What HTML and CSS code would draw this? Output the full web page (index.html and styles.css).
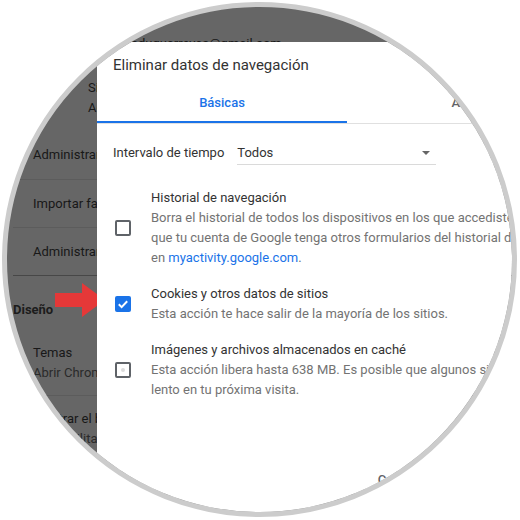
FILE: index.html
```html
<!DOCTYPE html>
<html lang="es">

<head>
    <meta charset="UTF-8">
    <title>Eliminar datos de navegación</title>
    <link rel="stylesheet" href="styles.css">
</head>

<body>
    <div class="lens">
        <!-- settings page behind the dialog (dimmed) -->
        <div class="page">
            <div class="account">
                <p class="email">eduguerreyes@gmail.com</p>
                <p class="acc-line">Sincronización activada</p>
                <p class="acc-line">Administrar tu cuenta de Google</p>
            </div>
            <div class="card">
                <div class="row">Administrar a otras personas</div>
                <div class="row">Importar favoritos y configuración</div>
                <div class="row">Administrar contraseñas</div>
            </div>
            <h2 class="section">Diseño</h2>
            <div class="card">
                <div class="row two">
                    <p>Temas</p>
                    <p class="sub">Abrir Chrome Web Store</p>
                </div>
                <div class="row two">
                    <p>Mostrar el botón de página principal</p>
                    <p class="sub">Deshabilitado</p>
                </div>
            </div>
        </div>

        <svg class="arrow" width="51" height="34" viewBox="0 0 51 34">
            <polygon points="0,10 27,10 27,0 50,17 27,34 27,24 0,24" />
        </svg>

        <div class="dialog">
            <h1 class="title">Eliminar datos de navegación</h1>
            <div class="tabs">
                <div class="tab active">Básicas</div>
                <div class="tab">Avanzado</div>
            </div>

            <div class="range">
                <span class="range-label">Intervalo de tiempo</span>
                <div class="select">
                    <span>Todos</span>
                    <span class="caret"></span>
                </div>
            </div>

            <div class="option">
                <span class="checkbox"></span>
                <div class="option-text">
                    <p class="option-title">Historial de navegación</p>
                    <p class="option-desc">Borra el historial de todos los dispositivos en los que accediste. Es posible<br>que tu cuenta de Google tenga otros formularios del historial de navegación<br>en <a href="#">myactivity.google.com</a>.</p>
                </div>
            </div>

            <div class="option">
                <span class="checkbox checked">
                    <svg width="16" height="16" viewBox="0 0 16 16">
                        <path d="M3.8 8.3l2.8 2.8 5.6-5.8" fill="none" stroke="#fff" stroke-width="2" />
                    </svg>
                </span>
                <div class="option-text">
                    <p class="option-title">Cookies y otros datos de sitios</p>
                    <p class="option-desc">Esta acción te hace salir de la mayoría de los sitios.</p>
                </div>
            </div>

            <div class="option">
                <span class="checkbox"><span class="dot"></span></span>
                <div class="option-text">
                    <p class="option-title">Imágenes y archivos almacenados en caché</p>
                    <p class="option-desc">Esta acción libera hasta 638 MB. Es posible que algunos sitios carguen más<br>lento en tu próxima visita.</p>
                </div>
            </div>

            <div class="actions">
                <button class="btn">Cancelar</button>
                <button class="btn primary">Borrar datos</button>
            </div>
        </div>
    </div>
</body>

</html>
```

FILE: styles.css
```css
:root {
    --ring: #cccccc;
    --backdrop: #666666;
    --backdrop-text: #181818;
    --blue: #1a73e8;
    --title: #333333;
    --muted: #737373;
}

* {
    box-sizing: border-box;
    margin: 0;
    padding: 0;
}

body {
    background: #fff;
    font-family: Roboto, "Liberation Sans", sans-serif;
    font-size: 13px;
    line-height: 20px;
}

.lens {
    position: relative;
    width: 515px;
    height: 515px;
    margin: 2px;
    border: 5px solid var(--ring);
    border-radius: 50%;
    overflow: hidden;
    background: var(--backdrop);
}

/* dimmed page */
.page {
    padding: 27px 0 0 6px;
    color: var(--backdrop-text);
    white-space: nowrap;
}

.account {
    padding-left: 75px;
}

.email {
    margin-left: 43px;
    margin-bottom: 24px;
}

.card {
    margin-top: 13px;
    border-bottom: 1px solid #474747;
}

.card .row {
    height: 48px;
    padding-left: 20px;
    display: flex;
    align-items: center;
}

.card .row + .row {
    border-top: 1px solid #5c5c5c;
}

.card .row.two {
    height: auto;
    padding: 12px 0 12px 20px;
    flex-direction: column;
    align-items: flex-start;
}

.card .row.two + .row.two {
    padding-top: 13px;
}

.sub {
    color: #2a2a2a;
}

.section {
    margin-top: 24px;
    font-size: 13px;
    font-weight: 700;
    line-height: 20px;
    color: #1c1c1c;
}

.section + .card {
    margin-top: 11px;
    border-bottom: none;
}

.arrow {
    position: absolute;
    left: 48px;
    top: 276px;
    fill: #f03535;
    opacity: 0.92;
}

/* dialog */
.dialog {
    position: absolute;
    left: 90px;
    top: 35px;
    width: 516px;
    height: 540px;
    background: #fff;
    color: var(--title);
    white-space: nowrap;
}

.title {
    padding: 13px 16px 0;
    font-size: 15px;
    font-weight: 400;
    line-height: 20px;
}

.tabs {
    display: flex;
    margin-top: 8px;
    border-bottom: 1px solid #e0e0e0;
}

.tab {
    flex: 1;
    height: 40px;
    line-height: 40px;
    text-align: center;
    font-weight: 500;
    color: #5f6368;
}

.tab.active {
    flex: 0 0 250px;
    color: var(--blue);
    box-shadow: inset 0 -2px 0 var(--blue);
}

.range {
    display: flex;
    align-items: flex-start;
    gap: 13px;
    margin-top: 19px;
    padding-left: 16px;
}

.select {
    width: 199px;
    height: 22px;
    display: flex;
    justify-content: space-between;
    border-bottom: 1px solid #dadada;
    padding-right: 6px;
}

.caret {
    width: 0;
    height: 0;
    margin-top: 8px;
    border-left: 4px solid transparent;
    border-right: 4px solid transparent;
    border-top: 4px solid #666;
}

.option {
    display: flex;
    align-items: center;
    gap: 20px;
    padding-left: 18px;
    margin-top: 16px;
}

.range + .option {
    margin-top: 23px;
}

.checkbox {
    width: 16px;
    height: 16px;
    flex-shrink: 0;
    border: 2px solid #5f6368;
    border-radius: 2px;
    display: flex;
    align-items: center;
    justify-content: center;
}

.checkbox.checked {
    border: none;
    background: var(--blue);
}

.dot {
    width: 4px;
    height: 4px;
    border-radius: 50%;
    background: #dcdcdc;
}

.option-title {
    color: var(--title);
}

.option-desc {
    color: var(--muted);
}

.option-desc a {
    color: var(--blue);
    text-decoration: none;
}

.actions {
    display: flex;
    justify-content: flex-end;
    gap: 8px;
    margin-top: 62px;
    padding-right: 56px;
}

.btn {
    font: inherit;
    font-size: 13px;
    font-weight: 500;
    line-height: 20px;
    padding: 8px 16px;
    border: none;
    border-radius: 4px;
    background: none;
    color: #5f6368;
}

.btn.primary {
    background: var(--blue);
    color: #fff;
}
```
